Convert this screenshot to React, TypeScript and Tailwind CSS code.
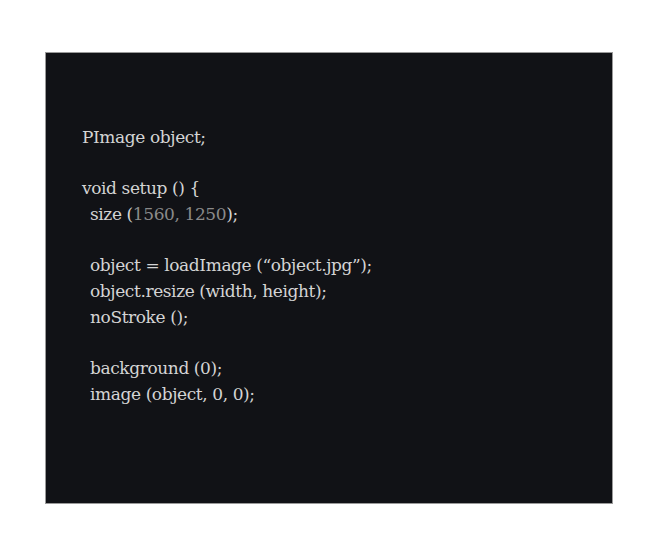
import React from "react";

type Seg = { t: string; dim?: boolean };

const lines: { indent?: boolean; segs: Seg[] }[] = [
  { segs: [{ t: "PImage object;" }] },
  { segs: [] },
  { segs: [{ t: "void setup () {" }] },
  { indent: true, segs: [{ t: "size (" }, { t: "1560, 1250", dim: true }, { t: ");" }] },
  { segs: [] },
  { indent: true, segs: [{ t: "object = loadImage (\u201Cobject.jpg\u201D);" }] },
  { indent: true, segs: [{ t: "object.resize (width, height);" }] },
  { indent: true, segs: [{ t: "noStroke ();" }] },
  { segs: [] },
  { indent: true, segs: [{ t: "background (0);" }] },
  { indent: true, segs: [{ t: "image (object, 0, 0);" }] },
];

export default function App() {
  return (
    <div className="w-[655px] h-[559px] bg-white pt-[52px] pl-[45px]">
      <div className="w-[568px] h-[452px] bg-[#111216] border border-[#9a9a9a] pt-[72px] pl-[36px]">
        <div className="font-['DejaVu_Serif',serif] text-[17px] leading-[25.7px] text-[#d4d4d4] whitespace-pre tracking-[-0.4px]">
          {lines.map((l, i) => (
            <div key={i} className={l.indent ? "h-[25.7px] pl-2" : "h-[25.7px]"}>
              {l.segs.map((s, j) => (
                <span key={j} className={s.dim ? "text-[#8a8a8a]" : ""}>
                  {s.t}
                </span>
              ))}
            </div>
          ))}
        </div>
      </div>
    </div>
  );
}
